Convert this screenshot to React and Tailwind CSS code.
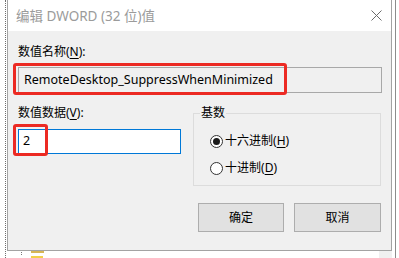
import React from 'react';

const FONT = { fontFamily: '"Noto Sans", "Noto Sans CJK SC", sans-serif' };

const Radio = ({ checked, label, hotkey }) => (
  <div className="flex items-center h-[16px]">
    <span className="w-[13px] h-[13px] rounded-full border border-[#333] bg-white flex items-center justify-center">
      {checked && <span className="w-[7px] h-[7px] rounded-full bg-[#1a1a1a]" />}
    </span>
    <span className="ml-[2px] text-[12px] leading-[16px] text-black">
      {label}(<span className="underline underline-offset-2">{hotkey}</span>)
    </span>
  </div>
);

const CloseIcon = () => (
  <svg width="11" height="11" viewBox="0 0 11 11" className="block">
    <path d="M0.5 0.5 L10.5 10.5 M10.5 0.5 L0.5 10.5" stroke="#6b6b6b" strokeWidth="1" />
  </svg>
);

export default function App() {
  return (
    <div className="w-[399px] h-[258px] bg-white flex overflow-hidden relative" style={FONT}>
      {/* desktop behind the dialog */}
      <div className="w-[5px]" />
      <div className="w-px h-full border-l border-dotted border-[#6f6f6f]" />
      <div className="w-px" />

      {/* dialog */}
      <div className="w-[385px] h-[251px] border-x border-b border-[#a3a3a3] flex flex-col shrink-0">
        <div className="h-[31px] bg-white flex items-center justify-between pl-[8px] pr-[9px]">
          <span className="text-[13.5px] text-[#9b9b9b] leading-[16px]">编辑 DWORD (32 位)值</span>
          <CloseIcon />
        </div>

        <div className="flex-1 bg-[#f0f0f0] pl-[10px] pr-[9px] pt-[13px] flex flex-col">
          <div className="text-[12px] leading-[16px] text-black">
            数值名称(<span className="underline underline-offset-2">N</span>):
          </div>
          <div className="mt-[7px] h-[26px] border border-[#a8a8a8] bg-[#f0f0f0] flex items-center pl-[5px] text-[12.5px] text-black">
            RemoteDesktop_SuppressWhenMinimized
          </div>

          <div className="mt-[12px] flex gap-[12px]">
            <div className="w-[163px] flex flex-col">
              <div className="text-[12px] leading-[16px] text-black">
                数值数据(<span className="underline underline-offset-2">V</span>):
              </div>
              <div className="mt-[8px] h-[25px] border border-[#0078d7] bg-white flex items-center pl-[4px] text-[12.5px] text-black">
                2
              </div>
            </div>

            <fieldset className="w-[188px] h-[81px] border border-[#dcdcdc] pl-[16px] pt-[12px] flex flex-col gap-[11px]">
              <legend className="-ml-[10px] px-[1px] text-[12px] leading-[16px] text-black">基数</legend>
              <Radio checked label="十六进制" hotkey="H" />
              <Radio label="十进制" hotkey="D" />
            </fieldset>
          </div>

          <div className="mt-[17px] flex justify-end gap-[10px] pr-[1px]">
            <button className="w-[86px] h-[29px] border border-[#adadad] bg-[#e1e1e1] text-[12px] text-black">确定</button>
            <button className="w-[87px] h-[29px] border border-[#adadad] bg-[#e1e1e1] text-[12px] text-black">取消</button>
          </div>
        </div>
      </div>

      <div className="w-[3px]" />
      <div className="w-px h-full bg-[#8c8c8c]" />

      {/* bits of the registry tree showing under the dialog */}
      <div className="absolute left-[31px] top-[251px] w-[13px] h-[2px] bg-[#d6b656]" />
      <div className="absolute left-[31px] top-[256px] w-[12px] h-[2px] bg-[#f2cf4a]" />
      <div className="absolute left-[21px] top-[252px] w-px h-px bg-[#777]" />
      <div className="absolute left-[21px] top-[254px] w-px h-px bg-[#777]" />
      <div className="absolute left-[379px] top-[251px] w-[13px] h-[7px] bg-[#f0f0f0]" />

      {/* red annotation boxes */}
      <div className="absolute left-[13px] top-[63px] w-[274px] h-[32px] border-[3px] border-[#ec2a23] rounded-[3px]" />
      <div className="absolute left-[13px] top-[124px] w-[35px] h-[32px] border-[3px] border-[#ec2a23] rounded-[3px]" />
    </div>
  );
}
